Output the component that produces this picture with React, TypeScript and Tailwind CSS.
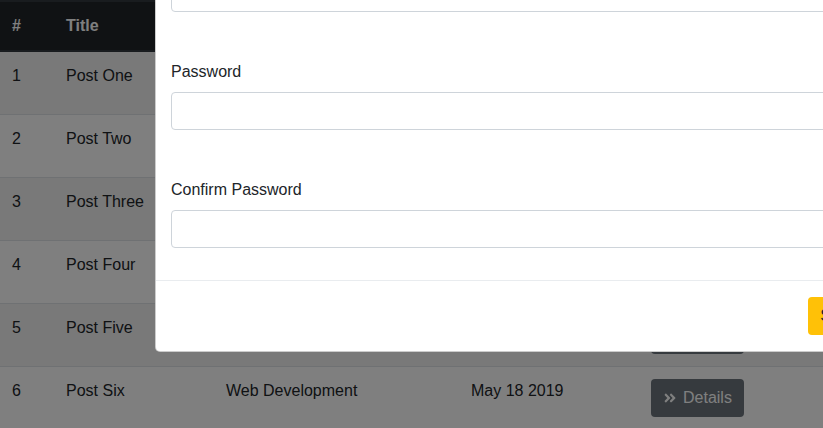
import { FaAngleDoubleRight } from "react-icons/fa";

const posts = [
  { id: 1, title: "Post One", category: "Web Development", date: "May 18 2019" },
  { id: 2, title: "Post Two", category: "Tech Gadgets", date: "May 18 2019" },
  { id: 3, title: "Post Three", category: "Business", date: "May 18 2019" },
  { id: 4, title: "Post Four", category: "Web Development", date: "May 18 2019" },
  { id: 5, title: "Post Five", category: "Tech Gadgets", date: "May 18 2019" },
  { id: 6, title: "Post Six", category: "Web Development", date: "May 18 2019" },
];

function Field({ label }: { label: string }) {
  return (
    <div className="flex flex-col">
      <label className="mb-2 text-base leading-6 text-[#212529]">{label}</label>
      <input
        type="text"
        className="h-[38px] w-full rounded border border-[#ced4da] bg-white px-3 outline-none"
      />
    </div>
  );
}

export default function App() {
  return (
    <div
      className="relative h-[428px] w-[823px] overflow-hidden bg-white text-[#212529]"
      style={{ fontFamily: '"Liberation Sans", Arial, sans-serif' }}
    >
      {/* Posts table */}
      <table className="w-full border-collapse text-left text-base leading-6">
        <thead className="bg-[#212529] text-white">
          <tr>
            <th className="w-[54px] border-t-2 border-b-2 border-[#32383e] p-3 font-bold">#</th>
            <th className="w-[160px] border-t-2 border-b-2 border-[#32383e] p-3 font-bold">Title</th>
            <th className="w-[245px] border-t-2 border-b-2 border-[#32383e] p-3 font-bold">Category</th>
            <th className="w-[180px] border-t-2 border-b-2 border-[#32383e] p-3 font-bold">Date</th>
            <th className="border-t-2 border-b-2 border-[#32383e] p-3"></th>
          </tr>
        </thead>
        <tbody>
          {posts.map((post, i) => (
            <tr
              key={post.id}
              className={
                i % 2 === 0
                  ? "border-t border-[#dee2e6] bg-[#f2f2f2]"
                  : "border-t border-[#dee2e6] bg-white"
              }
            >
              <td className="p-3 align-top">{post.id}</td>
              <td className="p-3 align-top">{post.title}</td>
              <td className="p-3 align-top">{post.category}</td>
              <td className="p-3 align-top">{post.date}</td>
              <td className="p-3 align-top">
                <button className="flex h-[38px] items-center gap-[6px] rounded bg-[#6c757d] px-3 text-base text-white">
                  <FaAngleDoubleRight className="h-[14px] w-[14px]" />
                  Details
                </button>
              </td>
            </tr>
          ))}
        </tbody>
      </table>

      {/* Backdrop */}
      <div className="absolute inset-0 bg-black/50" />

      {/* Modal */}
      <div className="absolute bottom-[76px] left-[155px] w-[744px] rounded-[5px] border border-black/20 bg-white">
        <div className="flex items-center justify-between border-b border-[#dee2e6] bg-[#ffc107] p-4">
          <h5 className="text-xl">Add User</h5>
        </div>
        <div className="flex flex-col gap-12 pt-4 pr-4 pb-8 pl-[15px]">
          <Field label="Name" />
          <Field label="Email" />
          <Field label="Password" />
          <Field label="Confirm Password" />
        </div>
        <div className="flex justify-end border-t border-[#e9ecef] p-4">
          <button className="h-[38px] rounded bg-[#ffc107] px-3 text-base text-[#212529]">
            Submit
          </button>
        </div>
      </div>
    </div>
  );
}
